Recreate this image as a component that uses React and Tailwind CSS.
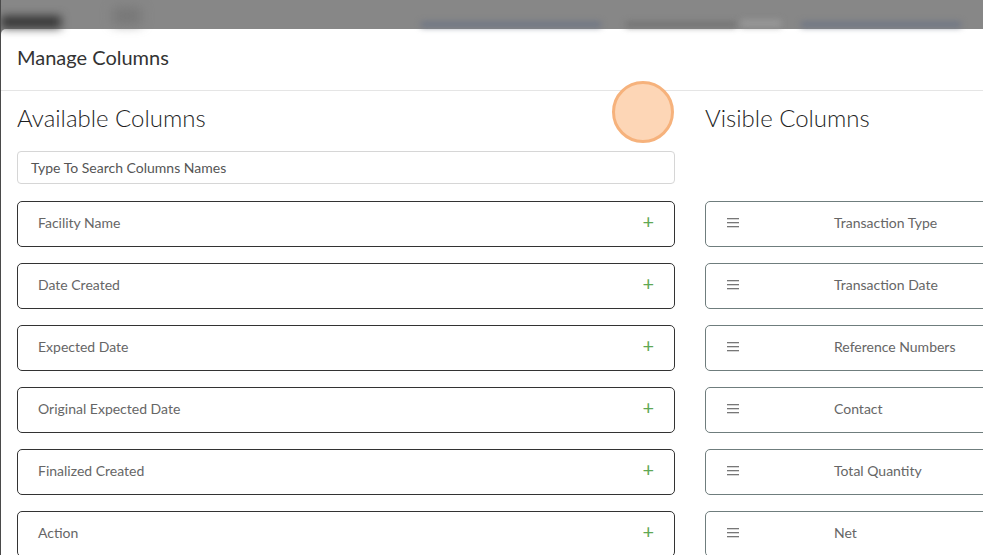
export default function App() {
  const left = [
    "Facility Name",
    "Date Created",
    "Expected Date",
    "Original Expected Date",
    "Finalized Created",
    "Action",
  ];
  const right = [
    "Transaction Type",
    "Transaction Date",
    "Reference Numbers",
    "Contact",
    "Total Quantity",
    "Net",
  ];
  return (
    <div
      className="relative h-[555px] w-[983px] overflow-hidden bg-[#878787] border-l border-[#4a4a4a]"
      style={{ fontFamily: "Lato, 'Open Sans', sans-serif" }}
    >
      <div className="relative h-[29px] w-full">
        <div className="absolute left-[0px] top-[16px] h-[12px] w-[60px] bg-[#333] blur-[5px]" />
        <div className="absolute left-[112px] top-[8px] h-[16px] w-[28px] bg-[#777] blur-[6px]" />
        <div className="absolute left-[420px] top-[22px] h-[5px] w-[180px] bg-[#6b7385] blur-[3px]" />
        <div className="absolute left-[625px] top-[22px] h-[5px] w-[110px] bg-[#707070] blur-[3px]" />
        <div className="absolute left-[740px] top-[20px] h-[7px] w-[40px] bg-[#999] blur-[3px]" />
        <div className="absolute left-[800px] top-[22px] h-[5px] w-[160px] bg-[#6b7385] blur-[3px]" />
      </div>
      <div className="w-[1400px] rounded-tl-[5px] bg-white h-[600px]">
        <div className="flex h-[62px] items-center border-b border-[#e5e5e5] px-[16px] pb-[6px] text-[20px] text-[#333]">
          Manage Columns
        </div>
        <div className="flex gap-[30px] px-[16px] pt-[9px]">
          <div className="flex w-[658px] flex-col">
            <div className="h-[36px] text-[24px] font-light leading-[36px] text-[#1f1f1f]">
              Available Columns
            </div>
            <div className="mt-[15px] flex h-[33px] items-center rounded-[4px] border border-[#d6d6d6] px-[13px] text-[14px] text-[#555]">
              Type To Search Columns Names
            </div>
            <div className="mt-[17px] flex flex-col gap-[16px]">
              {left.map((t) => (
                <div
                  key={t}
                  className="flex h-[46px] items-center justify-between rounded-[5px] border border-[#333] pb-[3px] pl-[20px] pr-[20px] text-[14px] text-[#666]"
                >
                  <span>{t}</span>
                  <span className="pb-[3px] text-[20px] leading-none text-[#5fa855]">+</span>
                </div>
              ))}
            </div>
          </div>
          <div className="flex w-[658px] flex-col">
            <div className="h-[36px] text-[24px] font-light leading-[36px] text-[#1f1f1f]">
              Visible Columns
            </div>
            <div className="mt-[15px] h-[33px]" />
            <div className="mt-[17px] flex flex-col gap-[16px]">
              {right.map((t) => (
                <div
                  key={t}
                  className="flex h-[46px] items-center rounded-[5px] border border-[#6f7d7d] pb-[3px] pl-[21px] text-[14px] text-[#666]"
                >
                  <span className="flex w-[107px] items-center">
                    <svg width="12" height="11" viewBox="0 0 12 11">
                      <rect x="0" y="1" width="12" height="1.3" fill="#777" />
                      <rect x="0" y="5" width="12" height="1.3" fill="#777" />
                      <rect x="0" y="9" width="12" height="1.3" fill="#777" />
                    </svg>
                  </span>
                  <span>{t}</span>
                </div>
              ))}
            </div>
          </div>
        </div>
      </div>
      <div className="absolute left-[611px] top-[81px] h-[62px] w-[62px] rounded-full border-[3px] border-[#f6b27c] bg-[#fdd6b6]" />
    </div>
  );
}
